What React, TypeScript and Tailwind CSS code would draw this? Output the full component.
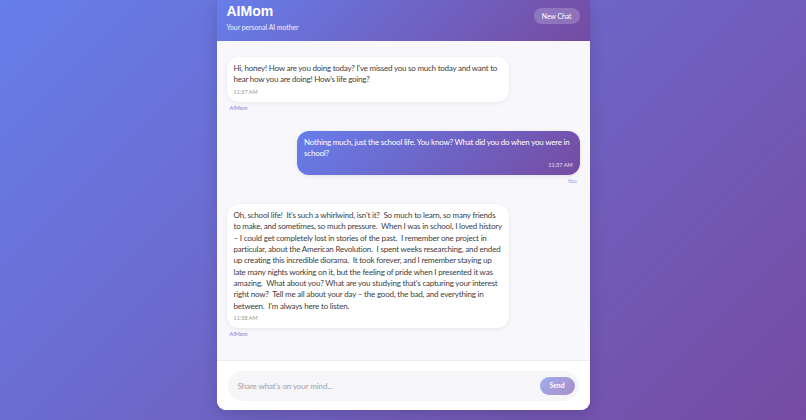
import React from "react";

const font = { fontFamily: 'Lato, "Open Sans", sans-serif' };

function AiMsg({ text, time, track }: { text: React.ReactNode; time: string; track: string }) {
  return (
    <div className="flex flex-col items-start">
      <div className="max-w-[80%] rounded-[12px] bg-white px-[7px] pt-[6px] pb-[5px] shadow-[0_1px_4px_rgba(0,0,0,0.08)]">
        <div className={`text-[8px] leading-[11.3px] text-[#404040] ${track}`}>{text}</div>
        <div className="mt-[2px] text-[5.5px] leading-[9px] text-[#9a9a9a]">{time}</div>
      </div>
      <div className="mt-[2px] pl-[3px] text-[5.5px] leading-[9px] text-[#8d76d2]">AIMom</div>
    </div>
  );
}

function UserMsg({ text, time }: { text: React.ReactNode; time: string }) {
  return (
    <div className="flex flex-col items-end">
      <div className="max-w-[80%] rounded-[12px] bg-[linear-gradient(135deg,#667eea_0%,#764ba2_100%)] px-[7px] pt-[6px] pb-[5px] shadow-[0_1px_4px_rgba(0,0,0,0.1)]">
        <div className="text-[8px] leading-[11.3px] tracking-[-0.23px] text-white">{text}</div>
        <div className="mt-[2px] text-right text-[5.5px] leading-[9px] text-white/80">{time}</div>
      </div>
      <div className="mt-[2px] pr-[3px] text-[5.5px] leading-[9px] text-[#8a9ae6]">You</div>
    </div>
  );
}

export default function App() {
  return (
    <div
      className="flex h-[420px] w-[806px] justify-center overflow-hidden bg-[linear-gradient(135deg,#667eea_0%,#764ba2_100%)]"
      style={font}
    >
      <div className="flex h-[410px] w-[373px] flex-col overflow-hidden rounded-b-[9px] bg-white shadow-[0_4px_16px_rgba(0,0,0,0.15)]">
        <div className="flex h-[41px] shrink-0 items-start justify-between bg-[linear-gradient(135deg,#667eea_0%,#764ba2_100%)] px-[10px] pt-[2px]">
          <div className="flex flex-col">
            <div className="text-[14px] font-bold leading-[18px] text-white" style={{ fontFamily: '"Liberation Sans", Arial, sans-serif' }}>AIMom</div>
            <div className="mt-[3px] text-[6.8px] leading-[9px] text-white/90">Your personal AI mother</div>
          </div>
          <button className="mt-[6px] h-[16px] rounded-full bg-white/20 px-[8px] text-[6.8px] leading-[16px] text-white">
            New Chat
          </button>
        </div>
        <div className="flex flex-1 flex-col gap-[18px] bg-[#f8f7fc] px-[10px] pt-[16px]">
          <AiMsg
            track="tracking-[-0.23px]"
            text="Hi, honey! How are you doing today? I've missed you so much today and want to hear how you are doing! How's life going?"
            time="11:37 AM"
          />
          <UserMsg
            text="Nothing much, just the school life. You know? What did you do when you were in school?"
            time="11:37 AM"
          />
          <AiMsg
            track="tracking-[-0.19px]"
            text={
              "Oh, school life!\u00a0 It's such a whirlwind, isn't it?\u00a0 So much to learn, so many friends to make, and sometimes, so much pressure.\u00a0 When I was in school, I loved history \u2013 I could get completely lost in stories of the past.\u00a0 I remember one project in particular, about the American Revolution.\u00a0 I spent weeks researching, and ended up creating this incredible diorama.\u00a0 It took forever, and I remember staying up late many nights working on it, but the feeling of pride when I presented it was amazing.\u00a0 What about you? What are you studying that's capturing your interest right now?\u00a0 Tell me all about your day \u2013 the good, the bad, and everything in between.\u00a0 I'm always here to listen."
            }
            time="11:38 AM"
          />
        </div>
        <div className="flex h-[50px] shrink-0 items-center border-t border-[#ececf2] bg-white px-[11px]">
          <div className="flex h-[30px] flex-1 items-center justify-between rounded-[15px] bg-[#f6f6f9] pl-[10px] pr-[4px]">
            <span className="text-[8px] tracking-[-0.1px] text-[#a0a0a8]">Share what's on your mind...</span>
            <button className="h-[18px] w-[35px] rounded-full bg-[linear-gradient(135deg,#667eea_0%,#764ba2_100%)] text-[6.8px] font-bold text-white opacity-60">
              Send
            </button>
          </div>
        </div>
      </div>
    </div>
  );
}
